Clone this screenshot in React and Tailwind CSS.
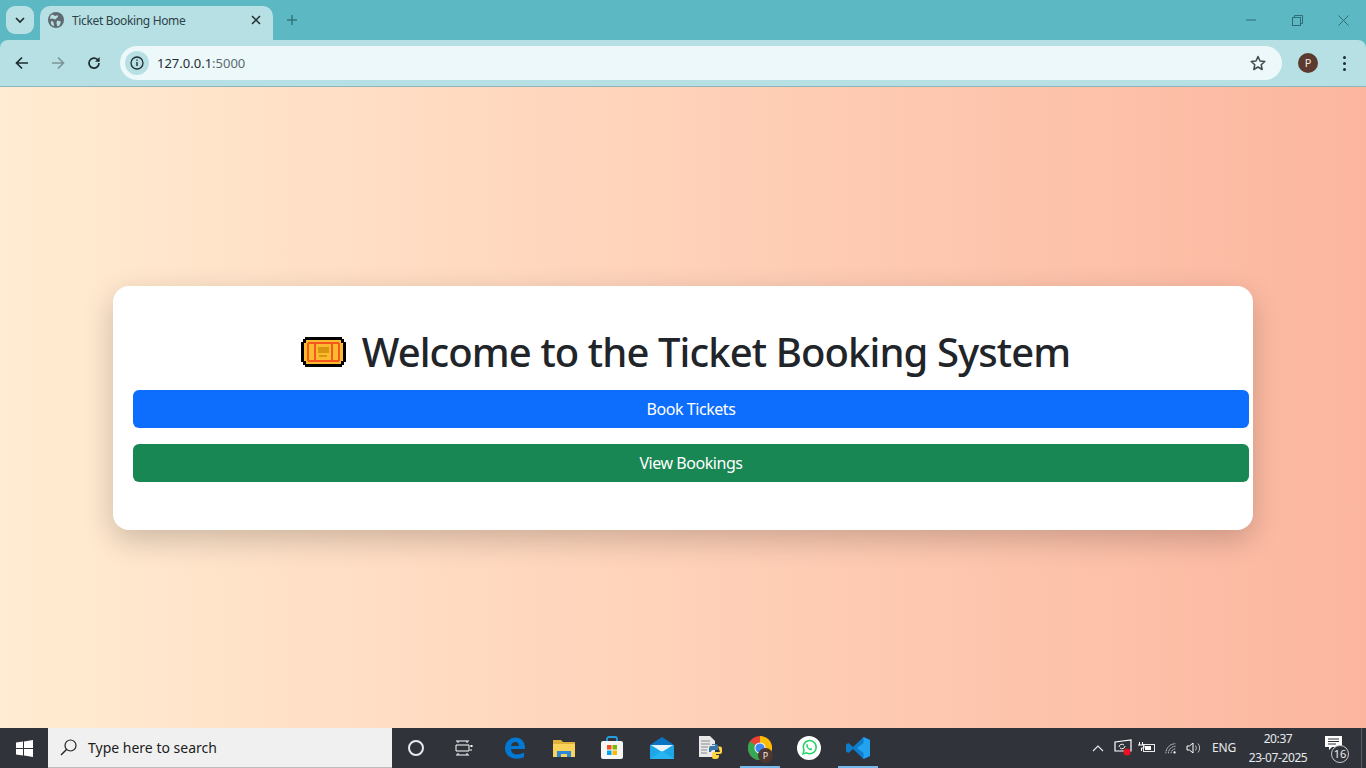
import React from "react";

const ui = { fontFamily: '"Noto Sans","Open Sans",sans-serif' };

function Tab() {
  return (
    <div className="relative ml-[8px] mt-[6px] flex h-[34px] w-[233px] items-center rounded-t-[10px] bg-[#b7e0e5] pb-[6px] pl-[8px] pr-[10px]">
      <svg width="16" height="16" viewBox="0 0 16 16" className="shrink-0">
        <circle cx="8" cy="8" r="8" fill="#5f6b70" />
        <path d="M4 2.500 7.500 4 9.500 3 10 5 7 7.500 4.500 6.500 2 7 2.500 4ZM9 8.500l4 1-1.500 4-2 1-1-3ZM3 9l2 .5 1 3-.5 2L3 12Z" fill="#b7e0e5" />
      </svg>
      <span className="ml-[8px] mt-[1px] whitespace-nowrap text-[12px] tracking-[-0.35px] text-[#2d4347]">Ticket Booking Home</span>
      <svg width="10" height="10" viewBox="0 0 10 10" className="ml-auto mr-[2px]">
        <path d="M1 1l8 8M9 1 1 9" stroke="#1f2d30" strokeWidth="1.500" />
      </svg>
    </div>
  );
}

function TitleBar() {
  return (
    <div className="flex h-[40px] shrink-0 items-start bg-[#5cb8c2]">
      <div className="ml-[6px] mt-[6px] flex h-[28px] w-[28px] items-center justify-center rounded-[9px] bg-[#b7e0e5]">
        <svg width="10" height="7" viewBox="0 0 10 7"><path d="M1 1l4 4 4-4" fill="none" stroke="#1f2d30" strokeWidth="1.700" /></svg>
      </div>
      <div className="-ml-[2px]"><Tab /></div>
      <svg width="12" height="12" viewBox="0 0 12 12" className="ml-[13px] mt-[14px]">
        <path d="M6 1v10M1 6h10" stroke="#35757d" strokeWidth="1.500" />
      </svg>
      <div className="ml-auto flex h-[40px] items-center">
        <div className="flex w-[46px] justify-center">
          <svg width="10" height="2"><path d="M0 1h10" stroke="#2f6c74" strokeWidth="1" /></svg>
        </div>
        <div className="flex w-[46px] justify-center">
          <svg width="11" height="11" viewBox="0 0 11 11"><rect x=".5" y="2.500" width="8" height="8" fill="none" stroke="#2f6c74" /><path d="M2.500 2.500V.5h8v8h-2" fill="none" stroke="#2f6c74" /></svg>
        </div>
        <div className="flex w-[46px] justify-center">
          <svg width="11" height="11" viewBox="0 0 11 11"><path d="M.5.5l10 10M10.500.5l-10 10" stroke="#2f6c74" /></svg>
        </div>
      </div>
    </div>
  );
}

function Toolbar() {
  return (
    <div className="flex h-[47px] shrink-0 items-center rounded-t-[8px] border-b border-[#8fb5ba] bg-[#b7e0e5]">
      <svg width="14" height="14" viewBox="0 0 14 14" className="ml-[15px]"><path d="M13 7H2M7 1.500 1.500 7 7 12.500" fill="none" stroke="#1f2d30" strokeWidth="1.700" /></svg>
      <svg width="14" height="14" viewBox="0 0 14 14" className="ml-[22px]"><path d="M1 7h11M7 1.500 12.500 7 7 12.500" fill="none" stroke="#7c9599" strokeWidth="1.700" /></svg>
      <svg width="14" height="14" viewBox="0 0 14 14" className="ml-[22px]"><path d="M12 7a5 5 0 1 1-1.500-3.500L12 5" fill="none" stroke="#1f2d30" strokeWidth="1.700" /><path d="M12.600 1v4.700H8z" fill="#1f2d30" /></svg>
      <div className="ml-[19px] flex h-[34px] w-[1162px] items-center rounded-full bg-[#ecf8f9] pl-[5px] pr-[16px]">
        <div className="flex h-[24px] w-[24px] items-center justify-center rounded-full bg-[#b7e0e5]">
          <svg width="14" height="14" viewBox="0 0 14 14"><circle cx="7" cy="7" r="6" fill="none" stroke="#1f2d30" strokeWidth="1.300" /><path d="M7 6v4M7 3.500v1.300" stroke="#1f2d30" strokeWidth="1.400" /></svg>
        </div>
        <span className="ml-[8px] mt-[1px] text-[13px] text-[#1f2d30]">127.0.0.1<span className="text-[#5b6b6f]">:5000</span></span>
        <svg width="16" height="16" viewBox="0 0 16 16" className="ml-auto"><path d="M8 1.500 10 6l4.800.5-3.600 3.200 1 4.800L8 12l-4.200 2.500 1-4.800L1.200 6.500 6 6Z" fill="none" stroke="#3f4b4e" strokeWidth="1.500" strokeLinejoin="round" /></svg>
      </div>
      <div className="ml-[16px] flex h-[20px] w-[20px] items-center justify-center rounded-full bg-[#5d3a2f] text-[11px] text-[#f3e7e2]">P</div>
      <div className="ml-[25px] flex flex-col gap-[3px]">
        <div className="h-[3px] w-[3px] rounded-full bg-[#1f2d30]" />
        <div className="h-[3px] w-[3px] rounded-full bg-[#1f2d30]" />
        <div className="h-[3px] w-[3px] rounded-full bg-[#1f2d30]" />
      </div>
    </div>
  );
}

function TicketIcon() {
  return (
    <svg width="45" height="30" viewBox="0 0 45 30" className="shrink-0" shapeRendering="crispEdges">
      <path d="M4 0h37v2h2v3h2v20h-2v3h-2v2H4v-2H2v-3H0V5h2V2h2Z" fill="#000" />
      <path d="M5 3h35v3h2v18h-2v3H5v-3H3V6h2Z" fill="#fcbb2e" />
      <rect x="6" y="6" width="2" height="18" fill="#f4581e" />
      <rect x="37" y="6" width="2" height="18" fill="#f4581e" />
      <rect x="7" y="5" width="31" height="2" fill="#f4581e" />
      <rect x="7" y="23" width="31" height="2" fill="#f4581e" />
      <rect x="13" y="6" width="2" height="18" fill="#f4581e" />
      <rect x="30" y="6" width="2" height="18" fill="#f4581e" />
      <rect x="17" y="10" width="11" height="6" fill="#d9950f" />
      <rect x="18" y="18" width="8" height="2" fill="#d9950f" />
    </svg>
  );
}

function Page() {
  return (
    <main className="flex min-h-0 flex-1 items-center justify-center bg-gradient-to-r from-[#ffecd2] to-[#fcb69f]">
      <div className="mt-[1px] h-[244px] w-[1140px] rounded-[16px] bg-white pb-[48px] pl-[20px] pr-[4px] pt-[42px] shadow-[0_10px_30px_rgba(0,0,0,0.2)]">
        <h1 className="mb-[14px] flex h-[48px] items-center justify-center gap-[16px] pr-[11px] text-[40px] font-medium leading-[48px] text-[#212529]">
          <TicketIcon />
          <span className="tracking-[-0.9px]">Welcome to the Ticket Booking System</span>
        </h1>
        <button className="block h-[38px] w-full rounded-[6px] bg-[#0d6efd] text-[16px] tracking-[-0.45px] text-white">Book Tickets</button>
        <button className="mt-[16px] block h-[38px] w-full rounded-[6px] bg-[#198754] text-[16px] tracking-[-0.45px] text-white">View Bookings</button>
      </div>
    </main>
  );
}

function Tray() {
  return (
    <div className="ml-auto flex h-full items-center text-[#e8eaec]">
      <svg width="12" height="8" viewBox="0 0 12 8"><path d="M1 7l5-5 5 5" fill="none" stroke="#e8eaec" strokeWidth="1.200" /></svg>
      <svg width="18" height="18" viewBox="0 0 18 18" className="ml-[10px]">
        <path d="M1 3l16-2v11H1Z" fill="none" stroke="#fff" strokeWidth="1.200" />
        <path d="M5 8a3 3 0 0 1 5-2M11 7a3 3 0 0 1-5 2" fill="none" stroke="#fff" />
        <circle cx="13" cy="13" r="3.500" fill="#e81123" />
      </svg>
      <svg width="17" height="12" viewBox="0 0 17 12" className="ml-[6px]">
        <path d="M1.500 0v3M4.500 0v3M0 3h6v3H3.500v3" fill="none" stroke="#fff" />
        <rect x="5.500" y="2.500" width="11" height="7" fill="none" stroke="#e8eaec" />
        <rect x="7" y="4" width="6" height="4" fill="#fff" />
      </svg>
      <svg width="13" height="13" viewBox="0 0 15 13" className="ml-[10px]">
        <path d="M1 12A11 11 0 0 1 12 1M4 12a8 8 0 0 1 8-8M7 12a5 5 0 0 1 5-5" fill="none" stroke="#e2e4e6" strokeDasharray="2 .7" />
        <circle cx="11" cy="11" r="1.300" fill="#fff" />
      </svg>
      <svg width="16" height="14" viewBox="0 0 16 14" className="ml-[8px]">
        <path d="M1 5h2.500L7 2v10L3.500 9H1Z" fill="none" stroke="#fff" />
        <path d="M9.500 4.500a4 4 0 0 1 0 5M12 2.500a7 7 0 0 1 0 9" fill="none" stroke="#b9bdc0" />
      </svg>
      <span className="ml-[10px] text-[12px] tracking-[-0.2px]">ENG</span>
      <div className="ml-[12px] flex w-[60px] flex-col items-center text-[12px] leading-[19px] tracking-[-0.4px]">
        <span>20:37</span>
        <span className="whitespace-nowrap">23-07-2025</span>
      </div>
      <div className="relative ml-[17px] mr-[12px] h-[24px] w-[24px]">
        <svg width="17" height="14" viewBox="0 0 17 14">
          <path d="M0 0h17v11H7l-3 3v-3H0Z" fill="#fff" />
          <path d="M3 3h11M3 5.500h11M3 8h8" stroke="#2f3339" />
        </svg>
        <div className="absolute left-[6px] top-[9px] flex h-[18px] w-[18px] items-center justify-center rounded-full border border-[#c9cdd0] bg-[#30343a] text-[11px] text-[#f2f2f2]">16</div>
      </div>
      <div className="h-full w-[1px] bg-[#5a5e63]" />
      <div className="w-[4px]" />
    </div>
  );
}

function AppIcons() {
  return (
    <div className="flex h-full items-center">
      <div className="flex w-[48px] justify-center">
        <div className="h-[16px] w-[16px] rounded-full border-[2.500px] border-[#e9eaec]" />
      </div>
      <div className="flex w-[48px] justify-center">
        <svg width="18" height="16" viewBox="0 0 18 16"><path d="M1 1h13M1 15h13M1 5h13v6H1ZM3 1v2M3 13v2M12 1v2M12 13v2" fill="none" stroke="#fff" /><rect x="15.500" y="5" width="2" height="2" fill="#fff" /><rect x="15.500" y="9" width="1" height="2" fill="#fff" /></svg>
      </div>
      <div className="flex w-[54px] justify-center">
        <svg width="22" height="22" viewBox="0 0 22 22">
          <path d="M21 12H7c0 3 2 5.500 6 5.500 3 0 5-.8 7-2v4.500c-2 1-4.500 1.700-7.500 1.700C5.500 21.700 1 17 1 11.500 1 5 6 .5 11.500.5 17 .5 21.500 5 21 12ZM7 9h8c0-2.500-1.500-4-4-4C9 5 7.500 6.500 7 9Z" fill="#0078d4" />
        </svg>
      </div>
      <div className="flex w-[44px] justify-center">
        <svg width="22" height="19" viewBox="0 0 22 19">
          <path d="M0 1h8l2 2h12v15H0Z" fill="#e0b23a" />
          <path d="M0 5h22v13H0Z" fill="#fbd35b" />
          <path d="M4 12h14v6h-4v-3H8v3H4Z" fill="#2f87d8" />
        </svg>
      </div>
      <div className="flex w-[52px] justify-center">
        <svg width="24" height="24" viewBox="0 0 24 24">
          <path d="M7 6V3a2 2 0 0 1 2-2h6a2 2 0 0 1 2 2v3" fill="none" stroke="#24a0e0" strokeWidth="1.800" />
          <rect x="1" y="5" width="22" height="18" rx="2" fill="#f6f6f6" />
          <rect x="7" y="9" width="4.500" height="4.500" fill="#f25022" />
          <rect x="12.500" y="9" width="4.500" height="4.500" fill="#7fba00" />
          <rect x="7" y="14.500" width="4.500" height="4.500" fill="#00a4ef" />
          <rect x="12.500" y="14.500" width="4.500" height="4.500" fill="#ffb900" />
        </svg>
      </div>
      <div className="flex w-[48px] justify-center">
        <svg width="24" height="22" viewBox="0 0 24 22">
          <path d="M12 0 24 8v14H0V8Z" fill="#0a74c4" />
          <path d="M0 8h24v14H0Z" fill="#1ea7e8" />
          <path d="M1 8l11 7 11-7" fill="#e6f4fb" />
          <path d="M0 22l12-8 12 8Z" fill="#28b5f2" />
        </svg>
      </div>
      <div className="flex w-[54px] justify-center pr-[4px]">
        <svg width="24" height="24" viewBox="0 0 24 24">
          <path d="M0 0h11l5 5v16H0Z" fill="#e8e8e8" />
          <path d="M2 5h9M2 8h9M2 11h7M2 14h6M2 17h6" stroke="#8a8a8a" />
          <path d="M13 8h4a2 2 0 0 1 2 2v4h-5a2 2 0 0 0-2 2h-2v-4a2 2 0 0 1 2-2h4v-1h-3Z" fill="#3776ab" />
          <path d="M19 10.500h2a2 2 0 0 1 2 2V16a2 2 0 0 1-2 2h-4v1h3v1a3 3 0 0 1-3 3h-2a2 2 0 0 1-2-2v-3a2 2 0 0 1 2-2h6Z" fill="#ffd343" />
        </svg>
      </div>
      <div className="relative flex h-full w-[40px] items-center justify-center">
        <svg width="24" height="24" viewBox="0 0 26 26">
          <circle cx="13" cy="13" r="13" fill="#ea4335" />
          <path d="M13 0a13 13 0 0 1 11.300 19.500L13 13Z" fill="#fbbc04" />
          <path d="M3 21A13 13 0 0 1 2 6l11 7Z" fill="#34a853" />
          <path d="M2 20 13 13l11.300 6.500A13 13 0 0 1 2 20Z" fill="#34a853" />
          <circle cx="13" cy="13" r="6" fill="#fff" />
          <circle cx="13" cy="13" r="5" fill="#4285f4" />
        </svg>
        <div className="absolute left-[18px] top-[20px] flex h-[15px] w-[15px] items-center justify-center rounded-full bg-[#4c3731] text-[9px] text-[#f2e6e1]">P</div>
        <div className="absolute bottom-0 left-0 h-[2px] w-[40px] bg-[#76b9ed]" />
      </div>
      <div className="flex w-[58px] justify-center">
        <svg width="24" height="24" viewBox="0 0 24 24">
          <circle cx="12" cy="12" r="12" fill="#fff" />
          <path d="M6 18l1-3.700a6.500 6.500 0 1 1 2.700 2.600Z" fill="#fff" stroke="#25d366" strokeWidth="1.500" />
          <path d="M9.500 8.500c.5-.8 1-.5 1.200 0l.5 1.200-.6.900c.5 1 1.300 1.700 2.300 2.200l.9-.8 1.400.7c.2.900-.8 1.600-1.700 1.500-2.500-.5-5-3.500-4-5.700Z" fill="#25d366" />
        </svg>
      </div>
      <div className="relative flex h-full w-[40px] items-center justify-center">
        <svg width="24" height="24" viewBox="0 0 24 24">
          <path d="M17.500 1 24 4v16l-6.500 3L7 13l-4.500 4L0 15.500v-7L2.500 7 7 11Z" fill="#0e7ecb" />
          <path d="M17.500 1 24 4v16l-6.500 3Zm0 6L11 12l6.500 5Z" fill="#22a2ef" fillRule="evenodd" />
        </svg>
        <div className="absolute bottom-0 left-0 h-[2px] w-[40px] bg-[#76b9ed]" />
      </div>
    </div>
  );
}

function Taskbar() {
  return (
    <div className="flex h-[40px] shrink-0 items-center bg-[#30343a]">
      <div className="flex h-full w-[48px] items-center justify-center">
        <svg width="17" height="17" viewBox="0 0 17 17"><path d="M0 2.500 7 1.500v6.500H0ZM8 1.400 17 0v8H8ZM0 9h7v6.500l-7-1ZM8 9h9v8l-9-1.400Z" fill="#fff" /></svg>
      </div>
      <div className="flex h-full w-[344px] items-center border-b border-[#bcbcbc] bg-[#f0f0f0] pl-[12px]">
        <svg width="17" height="17" viewBox="0 0 17 17"><circle cx="10.500" cy="6.500" r="5.500" fill="none" stroke="#222" strokeWidth="1.200" /><path d="M6.500 10.500 1 16" stroke="#222" strokeWidth="1.400" /></svg>
        <span className="ml-[11px] text-[14px] text-[#1c1c1c]">Type here to search</span>
      </div>
      <AppIcons />
      <Tray />
    </div>
  );
}

export default function App() {
  return (
    <div className="flex h-screen w-full flex-col overflow-hidden bg-[#5cb8c2]" style={ui}>
      <TitleBar />
      <Toolbar />
      <Page />
      <Taskbar />
    </div>
  );
}
